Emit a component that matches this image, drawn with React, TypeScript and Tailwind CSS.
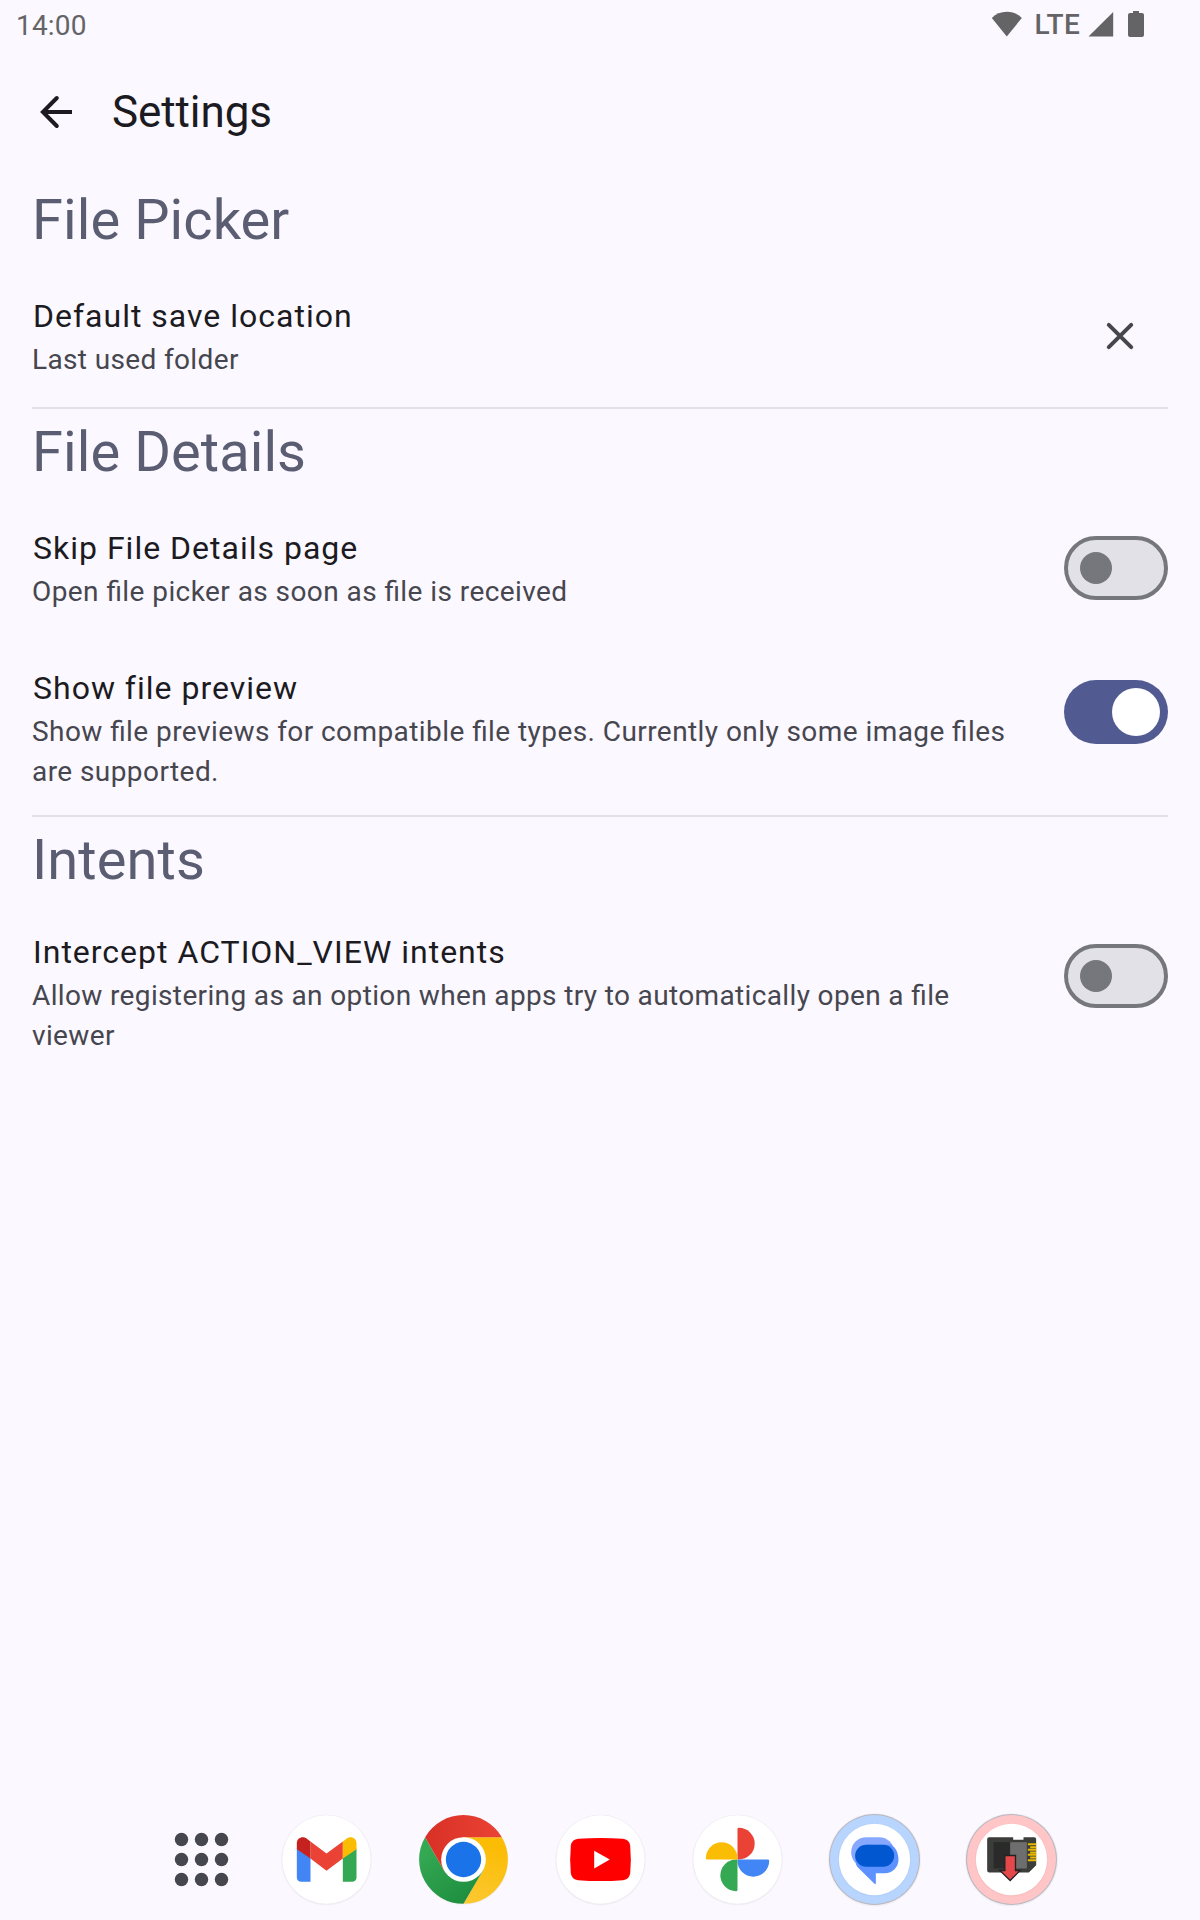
import type { ReactNode } from "react";

function StatusBar() {
  return (
    <div className="flex h-12 items-start justify-between pl-4 pr-14 text-[28px] text-[#646467]">
      <span className="leading-[52px] tracking-[0.2px]">14:00</span>
      <div className="flex h-12 items-start">
        <svg className="mr-[13px] mt-[11px]" width="31" height="26" viewBox="0 0 31 26" fill="#646467">
          <path d="M.8 7C4.800 3 9.900 .8 15.800 .8s11 2.200 15 6.200L15.800 25.400z" />
        </svg>
        <span className="font-medium leading-[50px] tracking-[0.3px]">LTE</span>
        <svg className="ml-[8px] mt-3" width="26" height="25" viewBox="0 0 26 25" fill="#646467">
          <path d="M.5 24.500 25.200 0v24.500z" />
        </svg>
        <svg className="ml-[13px] mt-[11px]" width="17" height="26" viewBox="0 0 17 26" fill="#646467">
          <path d="M6 0h6v2H15a2 2 0 0 1 2 2v20a2 2 0 0 1-2 2H3a2 2 0 0 1-2-2V4a2 2 0 0 1 2-2h3z" />
        </svg>
      </div>
    </div>
  );
}

function Header({ children }: { children: ReactNode }) {
  return <h2 className="my-2 h-[72px] text-[56px] leading-[72px] tracking-[0.08px] text-[#5b5d72]">{children}</h2>;
}

function Divider() {
  return <div className="relative z-10 -mt-px h-0.5 -mb-px bg-[#e2e1e9]" />;
}

function Toggle({ on }: { on?: boolean }) {
  return on ? (
    <div className="flex h-16 w-[104px] shrink-0 items-center justify-end rounded-full bg-[#515b92] pr-2">
      <div className="size-12 rounded-full bg-white" />
    </div>
  ) : (
    <div className="flex h-16 w-[104px] shrink-0 items-center rounded-full border-4 border-[#76767d] bg-[#e3e1e8] pl-3">
      <div className="size-8 rounded-full bg-[#76767d]" />
    </div>
  );
}

type RowProps = { title: string; text: string; tall?: boolean; tight?: boolean; children: ReactNode };

function Row({ title, text, tall, tight, children }: RowProps) {
  return (
    <div className={tall ? "flex h-44 items-start justify-between pt-6" : "flex h-36 items-center justify-between"}>
      <div className="w-[1000px]">
        <div className="pl-px text-[32px] leading-[48px] tracking-[1px] text-[#1b1b21]">{title}</div>
        <div
          className={`text-[28px] leading-10 text-[#46464f] [font-feature-settings:'liga'_1] ${
            tight ? "tracking-[0.36px]" : "tracking-[0.43px]"
          }`}
        >
          {text}
        </div>
      </div>
      <div className={tall ? "pt-4" : ""}>{children}</div>
    </div>
  );
}

function Disc() {
  return (
    <>
      <circle r="137" cy="2" fill="#000" opacity=".02" />
      <circle r="135" cy="1" fill="#000" opacity=".03" />
      <circle r="132.500" fill="#fff" />
    </>
  );
}

function Gmail() {
  return (
    <>
      <Disc />
      <path fill="#4285f4" d="M-89-33-48-5V67H-76a13 13 0 0 1-13-13z" />
      <path fill="#34a853" d="M90-33 49-5V67H77a13 13 0 0 0 13-13z" />
      <path fill="#ea4335" d="M-48-54 0-18 49-54V-3L0 34-48-3z" />
      <path fill="#c5221f" d="M-89-31V-49C-89-66-70-73-57-61L-48-54V-3z" />
      <path fill="#fbbc04" d="M90-31V-49C90-66 71-73 58-61L49-54V-3z" />
    </>
  );
}

function Chrome() {
  return (
    <>
      <defs>
        <linearGradient id="cr" x1="0" x2="1"><stop stopColor="#d93025" /><stop offset="1" stopColor="#ea4335" /></linearGradient>
        <linearGradient id="cg" x1="0" y1="0" x2=".7" y2="1"><stop offset=".2" stopColor="#34a853" /><stop offset="1" stopColor="#1e8e3e" /></linearGradient>
        <linearGradient id="cy" x1="0" y1="1" x2=".3" y2="0"><stop stopColor="#fcc934" /><stop offset="1" stopColor="#fbbc04" /></linearGradient>
      </defs>
      <circle r="135" cy="1" fill="#000" opacity=".03" />
      <path fill="url(#cy)" d="M0-67H115A133 133 0 0 1 0 133L58 34z" />
      <path fill="url(#cg)" d="M-115-67A133 133 0 0 0 0 133L58 34H-58z" />
      <path fill="url(#cr)" d="M-115-67A133 133 0 0 1 115-67H0L-58 34z" />
      <circle r="67" fill="#fff" />
      <circle r="53" fill="#1a73e8" />
    </>
  );
}

function YouTube() {
  return (
    <>
      <Disc />
      <path fill="#f00" d="M-67-62Q0-67 67-62Q86-60 89-42Q93 0 89 42Q86 60 67 62Q0 67-67 62Q-86 60-89 42Q-93 0-89-42Q-86-60-67-62z" />
      <path fill="#fff" d="M-19-26 28 0-19 27z" />
    </>
  );
}

function Photos() {
  return (
    <>
      <Disc />
      <path fill="#ea4335" d="M0 0V-91Q0-95 4-95A47.500 47.500 0 0 1 4 0z" />
      <path fill="#4285f4" d="M0 0H91Q95 0 95 4A47.500 47.500 0 0 1 0 4z" />
      <path fill="#34a853" d="M0 0V91Q0 95-4 95A47.500 47.500 0 0 1-4 0z" />
      <path fill="#fbbc04" d="M0 0H-91Q-95 0-95-4A47.500 47.500 0 0 1 0-4z" />
    </>
  );
}

function Ring({ color }: { color: string }) {
  return (
    <>
      <circle r="140" cy="1" fill="#000" opacity=".04" />
      <circle r="136.500" fill="#b9b9c0" />
      <circle r="133.500" fill={color} />
      <circle r="110" cy="1" fill="#000" opacity=".03" />
      <circle r="107" fill="#fff" />
    </>
  );
}

function Messages() {
  return (
    <>
      <Ring color="#b8d5ff" />
      <rect x="-70" y="-67" width="129" height="90" rx="45" fill="#86a9ff" />
      <path fill="#5c91ff" d="M-25-44H50C64-36 72-18 72 0A41 41 0 0 1 31 41H4V71Q4 76 0 73L-49 25C-56 18-58 8-58-11z" />
      <rect x="-58" y="-44" width="117" height="66" rx="33" fill="#0057d0" />
    </>
  );
}

function SdCard() {
  return (
    <>
      <Ring color="#ffc5c7" />
      <path fill="#3b3d3a" d="M-67-67H5V-59H36V-67H68Q74-67 74-61V17L52 39H-67Q-73 39-73 33V-61Q-73-67-67-67z" />
      <path fill="#2a2a2a" d="M-54-52H-4V27H-54z" />
      <path fill="#6e6e6e" d="M-4-52H46V27H-4z" />
      <path fill="none" stroke="#e6b800" strokeWidth="6" d="M49-46H74M56-37H74M49-29H74M56-21H74M49-14H74M56-6H74M49 2H74" />
      <path fill="#e5484b" stroke="#222" strokeWidth="4" d="M-20-12H12V33H26L-4 63-35 33H-20z" />
    </>
  );
}

function Dock() {
  const offsets = [-20, 0, 20];
  return (
    <div className="mt-auto flex h-[109px] items-start gap-[41px] pl-[153px]">
      <svg className="-mr-3" width="96" height="96" viewBox="-48.500 -48.500 96 96" fill="#46464f">
        {offsets.map((y) => offsets.map((x) => <circle key={`${x} ${y}`} cx={x} cy={y} r="6.700" />))}
      </svg>
      {[Gmail, Chrome, YouTube, Photos, Messages, SdCard].map((Icon, i) => (
        <svg key={i} width="96" height="96" viewBox="-145.500 -145.500 288 288">
          <Icon />
        </svg>
      ))}
    </div>
  );
}

export default function App() {
  return (
    <div className="flex h-[1920px] w-[1200px] flex-col overflow-hidden bg-[#fbf8ff] font-[Roboto,sans-serif]">
      <StatusBar />
      <header className="flex h-32 items-center pl-8">
        <svg width="48" height="48" viewBox="0 0 48 48" fill="none" stroke="#1b1b21" strokeWidth="4">
          <path d="M11 24H40" />
          <path d="M24.800 10 10.900 24 24.800 38" strokeLinecap="round" />
        </svg>
        <h1 className="ml-8 text-[44px] leading-[56px] tracking-[-0.1px] text-[#1b1b21]">Settings</h1>
      </header>
      <main className="px-8">
        <Header>File Picker</Header>
        <Row title="Default save location" text="Last used folder" tight>
          <div className="flex size-24 items-center justify-center">
            <svg width="48" height="48" viewBox="0 0 48 48" stroke="#46464f" strokeWidth="4" strokeLinecap="round">
              <path d="M12.800 12.800 35.200 35.200M35.200 12.800 12.800 35.200" />
            </svg>
          </div>
        </Row>
        <Divider />
        <Header>File Details</Header>
        <Row title="Skip File Details page" text="Open file picker as soon as file is received">
          <Toggle />
        </Row>
        <Row tall title="Show file preview" text="Show file previews for compatible file types. Currently only some image files are supported.">
          <Toggle on />
        </Row>
        <Divider />
        <Header>Intents</Header>
        <Row tall tight title="Intercept ACTION_VIEW intents" text="Allow registering as an option when apps try to automatically open a file viewer">
          <Toggle />
        </Row>
      </main>
      <Dock />
    </div>
  );
}
